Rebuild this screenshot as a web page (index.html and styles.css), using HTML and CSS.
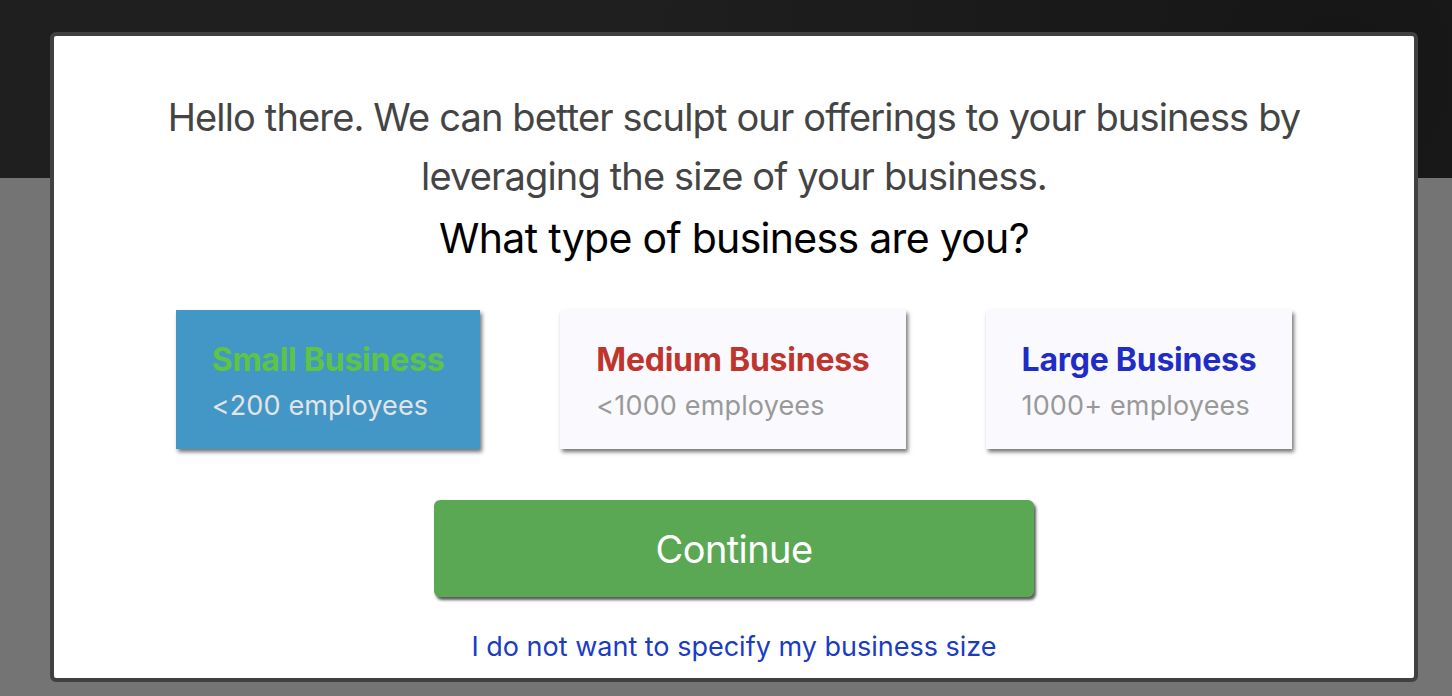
FILE: index.html
```html
<!DOCTYPE html>
<html lang="en">
<head>
<meta charset="utf-8">
<title>Business size</title>
<link rel="stylesheet" href="styles.css">
</head>
<body>
<div class="page">
  <div class="hero"></div>
  <div class="rest"></div>
</div>
<div class="modal">
  <div class="modal-body">
    <p class="intro">Hello there. We can better sculpt our offerings to your business by leveraging the size of your business.</p>
    <h2 class="question">What type of business are you?</h2>
    <div class="options">
      <div class="option selected">
        <div class="option-title title-small">Small Business</div>
        <div class="option-sub">&lt;200 employees</div>
      </div>
      <div class="option">
        <div class="option-title title-medium">Medium Business</div>
        <div class="option-sub">&lt;1000 employees</div>
      </div>
      <div class="option">
        <div class="option-title title-large">Large Business</div>
        <div class="option-sub">1000+ employees</div>
      </div>
    </div>
    <button class="continue" type="button">Continue</button>
    <a class="skip" href="#">I do not want to specify my business size</a>
  </div>
</div>
</body>
</html>
```
FILE: styles.css
```css
html, body {
  margin: 0;
  padding: 0;
  height: 100%;
}
body {
  font-family: Inter, "Noto Sans", "Liberation Sans", sans-serif;
  background: #747474;
  overflow: hidden;
}
.page {
  display: flex;
  flex-direction: column;
  height: 100%;
}
.hero {
  height: 178px;
  background: #1f1f1f;
  background-image: radial-gradient(circle at 92% 40%, #161616 0, #1f1f1f 55%);
}
.rest {
  flex: 1;
  background: #747474;
}
.modal {
  position: absolute;
  left: 50px;
  top: 32px;
  width: 1360px;
  height: 642px;
  border: 4px solid #404040;
  border-radius: 6px;
  background: #fff;
  overflow: hidden;
}
.modal-body {
  display: flex;
  flex-direction: column;
  align-items: center;
  padding: 52px 100px 0;
}
.intro {
  margin: 0;
  font-size: 38px;
  line-height: 59px;
  color: #444;
  text-align: center;
  letter-spacing: -0.85px;
}
.question {
  margin: 2px 0 0;
  font-size: 41px;
  line-height: 60px;
  font-weight: 400;
  color: #000;
  letter-spacing: -0.7px;
}
.options {
  display: flex;
  gap: 80px;
  margin-top: 42px;
}
.option {
  background: #f9f9fe;
  padding: 30px 36px 23px;
  box-shadow: 2px 3px 4px rgba(0,0,0,0.55);
}
.option.selected {
  background: #4397c7;
}
.option-title {
  font-size: 32px;
  font-weight: 700;
  line-height: 40px;
  letter-spacing: -0.25px;
}
.title-small { color: #5ec444; }
.title-medium { color: #bf352d; }
.title-large { color: #1f2dc6; }
.option-sub {
  font-size: 27px;
  line-height: 40px;
  color: #999;
  margin-top: 6px;
  letter-spacing: 0.15px;
}
.selected .option-sub { color: #e4e4e4; }
.continue {
  margin-top: 51px;
  width: 600px;
  height: 97px;
  padding: 0;
  border: none;
  border-radius: 6px;
  background: #5aa854;
  color: #fff;
  font-family: inherit;
  font-size: 38px;
  letter-spacing: -0.6px;
  box-shadow: 2px 3px 3px rgba(0,0,0,0.65);
  cursor: pointer;
}
.skip {
  display: block;
  margin-top: 33px;
  font-size: 27px;
  line-height: 33px;
  color: #1a3cc4;
  text-decoration: none;
}
```
